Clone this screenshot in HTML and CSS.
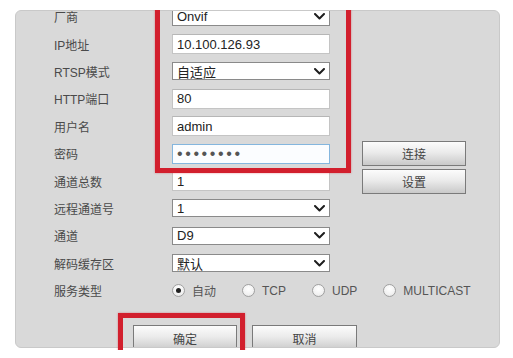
FILE: index.html
```html
<!DOCTYPE html>
<html lang="zh-CN">
<head>
<meta charset="utf-8">
<title>远程设备</title>
<link rel="stylesheet" href="styles.css">
</head>
<body>
<div class="clip">
  <div class="panel">
    <div class="form">
      <div class="label">厂商</div>
      <div class="select"><span>Onvif</span><svg class="chev" width="11" height="7" viewBox="0 0 11 7"><polyline points="1,1 5.5,5.5 10,1"/></svg></div>
      <div></div>

      <div class="label">IP地址</div>
      <div class="input">10.100.126.93</div>
      <div></div>

      <div class="label">RTSP模式</div>
      <div class="select"><span>自适应</span><svg class="chev" width="11" height="7" viewBox="0 0 11 7"><polyline points="1,1 5.5,5.5 10,1"/></svg></div>
      <div></div>

      <div class="label">HTTP端口</div>
      <div class="input">80</div>
      <div></div>

      <div class="label">用户名</div>
      <div class="input">admin</div>
      <div></div>

      <div class="label">密码</div>
      <div class="input focus"><span class="dots">••••••••</span></div>
      <div class="btn side">连接</div>

      <div class="label">通道总数</div>
      <div class="input">1</div>
      <div class="btn side">设置</div>

      <div class="label">远程通道号</div>
      <div class="select"><span>1</span><svg class="chev" width="11" height="7" viewBox="0 0 11 7"><polyline points="1,1 5.5,5.5 10,1"/></svg></div>
      <div></div>

      <div class="label">通道</div>
      <div class="select"><span>D9</span><svg class="chev" width="11" height="7" viewBox="0 0 11 7"><polyline points="1,1 5.5,5.5 10,1"/></svg></div>
      <div></div>

      <div class="label">解码缓存区</div>
      <div class="select"><span>默认</span><svg class="chev" width="11" height="7" viewBox="0 0 11 7"><polyline points="1,1 5.5,5.5 10,1"/></svg></div>
      <div></div>

      <div class="label">服务类型</div>
      <div class="radios">
        <div class="radio-item"><span class="radio checked"></span><span>自动</span></div>
        <div class="radio-item"><span class="radio"></span><span>TCP</span></div>
        <div class="radio-item"><span class="radio"></span><span>UDP</span></div>
        <div class="radio-item"><span class="radio"></span><span>MULTICAST</span></div>
      </div>
    </div>
    <div class="actions">
      <div class="btn wide">确定</div>
      <div class="btn wide2">取消</div>
    </div>
  </div>
  <div class="mark mark-top"></div>
  <div class="mark mark-bottom"></div>
</div>
</body>
</html>
```

FILE: styles.css
```css
html, body {
  margin: 0;
  padding: 0;
  background: #ffffff;
  overflow: hidden;
}

body {
  font-family: "Liberation Sans", "Noto Sans CJK SC", sans-serif;
  color: #444;
}

.clip {
  position: relative;
  margin-top: 10px;
  height: 340px;
  overflow: hidden;
}

.panel {
  margin-left: 15px;
  width: 485px;
  height: 338px;
  box-sizing: border-box;
  background: #d9d9d9;
  border: 1px solid #c9c9c9;
  border-radius: 6px;
  overflow: hidden;
}

.form {
  display: grid;
  grid-template-columns: 118px 158px 136px;
  grid-auto-rows: 27.4px;
  align-items: center;
  padding-left: 38px;
  margin-top: -8px;
}

.label {
  font-size: 12px;
  color: #4a4a4a;
  white-space: nowrap;
}

.input,
.select {
  box-sizing: border-box;
  background: #ffffff;
  font-size: 13px;
  color: #222;
  padding-left: 4px;
  display: flex;
  align-items: center;
  white-space: nowrap;
}

.input {
  height: 20px;
  border: 1px solid #c4c4c4;
  border-top-color: #b6b6b6;
}

.input.focus {
  border-color: #84b6de;
  background: #fbfdff;
}

.dots {
  font-size: 16px;
  letter-spacing: 2.6px;
  color: #555;
  line-height: 1;
}

.select {
  height: 18px;
  border: 1px solid #8a8a8a;
  justify-content: space-between;
  padding-right: 4px;
}

.chev {
  fill: none;
  stroke: #1e1e1e;
  stroke-width: 2;
  stroke-linecap: round;
  stroke-linejoin: round;
}

.btn {
  box-sizing: border-box;
  height: 25px;
  border: 1px solid #7a7a7a;
  background: linear-gradient(#fcfcfc 0%, #ebebeb 45%, #c9c9c9 100%);
  font-size: 12px;
  color: #444;
  display: flex;
  align-items: center;
  justify-content: center;
}

.btn.side {
  width: 104px;
  margin-left: 32px;
}

.radios {
  grid-column: 2 / 4;
  display: flex;
  align-items: center;
  gap: 26px;
  font-size: 12px;
  color: #555;
  white-space: nowrap;
}

.radio-item {
  display: flex;
  align-items: center;
  gap: 7px;
}

.radio {
  box-sizing: border-box;
  flex: none;
  width: 13px;
  height: 13px;
  border-radius: 50%;
  border: 1px solid #a0a0a0;
  background: radial-gradient(circle at 50% 35%, #ffffff 0%, #f2f2f2 60%, #dedede 100%);
  display: flex;
  align-items: center;
  justify-content: center;
}

.radio.checked::after {
  content: "";
  width: 5px;
  height: 5px;
  border-radius: 50%;
  background: #222;
}

.actions {
  display: flex;
  gap: 15px;
  padding-left: 117px;
  padding-top: 21px;
}

.btn.wide {
  width: 104px;
  height: 26px;
}

.btn.wide2 {
  width: 105px;
  height: 26px;
}

.mark {
  position: absolute;
  box-sizing: border-box;
  border: 5px solid #d21f2d;
  box-shadow: 0 0 2px rgba(210, 31, 45, 0.45);
}

.mark-top {
  left: 155px;
  top: -10px;
  width: 196px;
  height: 173px;
}

.mark-bottom {
  left: 118px;
  top: 303px;
  width: 127px;
  height: 45px;
  border-bottom: none;
}
```
